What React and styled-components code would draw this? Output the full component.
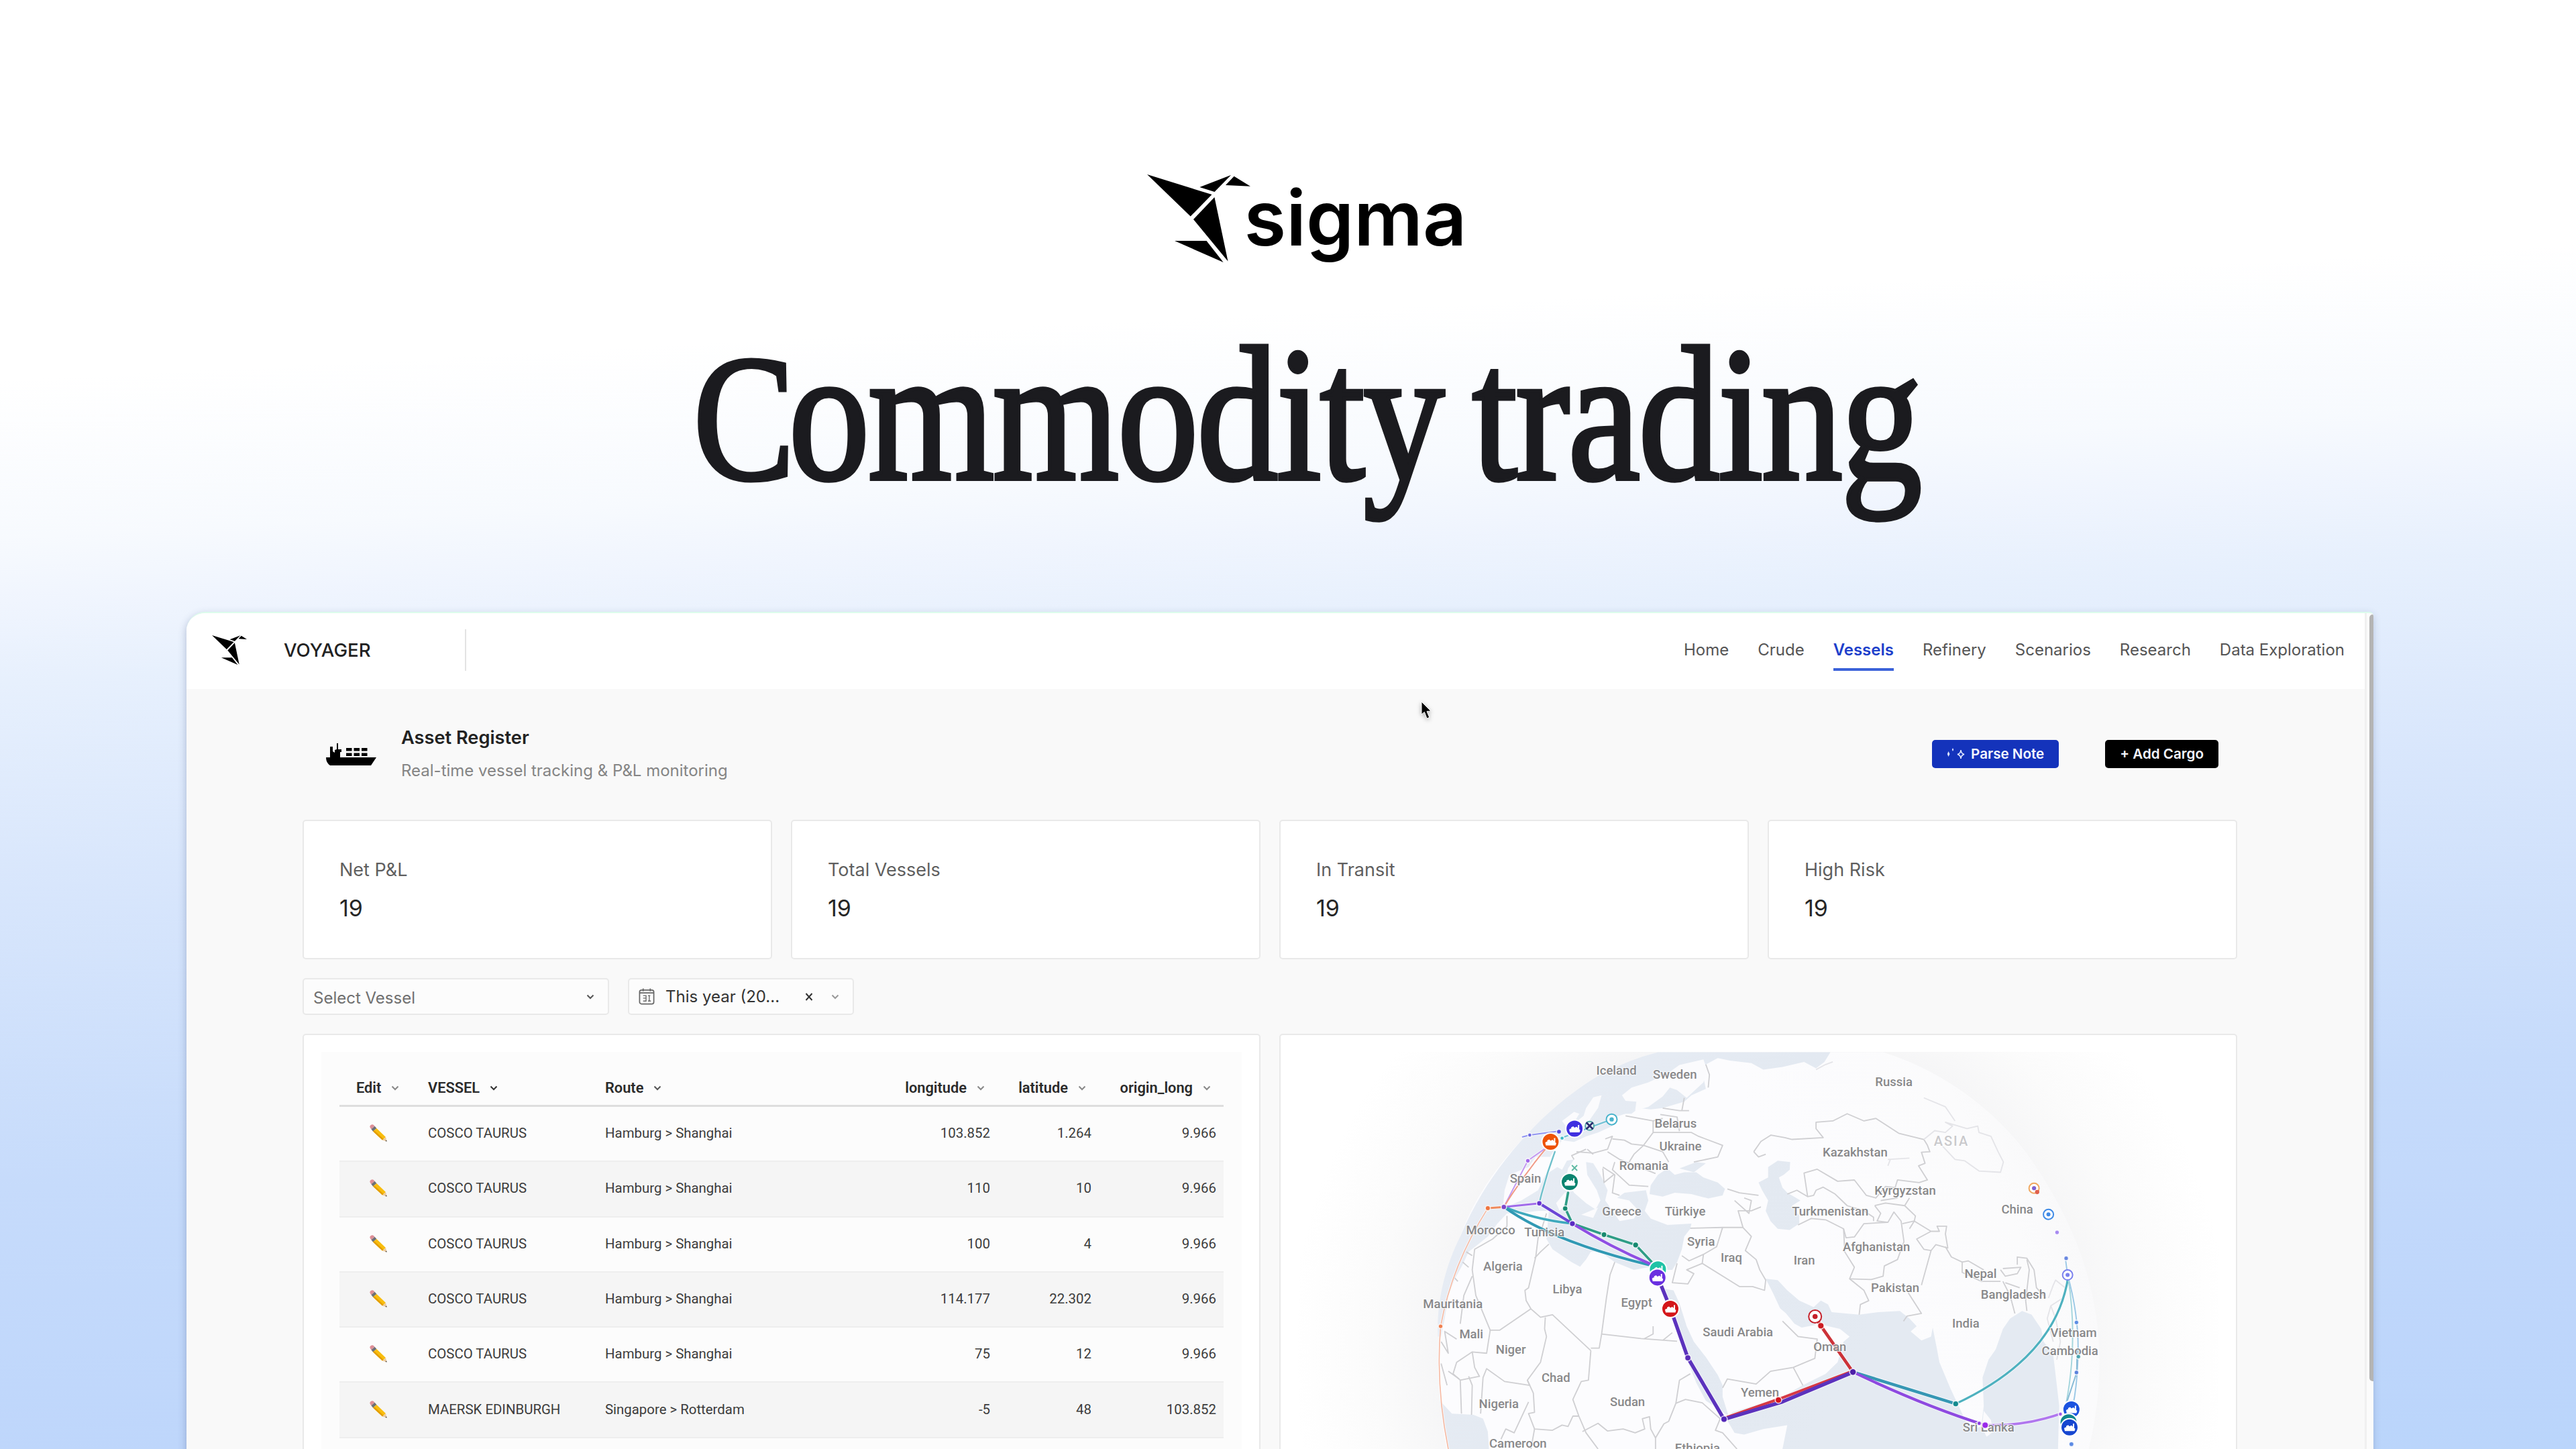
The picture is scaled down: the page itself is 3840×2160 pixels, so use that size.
import styled, { createGlobalStyle } from "styled-components";

const navItems = ["Home", "Crude", "Vessels", "Refinery", "Scenarios", "Research", "Data Exploration"];

const stats = [
    { label: "Net P&L", value: 19 },
    { label: "Total Vessels", value: 19 },
    { label: "In Transit", value: 19 },
    { label: "High Risk", value: 19 },
];

const rows = [
    ["COSCO TAURUS", "Hamburg > Shanghai", "103.852", "1.264", "9.966"],
    ["COSCO TAURUS", "Hamburg > Shanghai", "110", "10", "9.966"],
    ["COSCO TAURUS", "Hamburg > Shanghai", "100", "4", "9.966"],
    ["COSCO TAURUS", "Hamburg > Shanghai", "114.177", "22.302", "9.966"],
    ["COSCO TAURUS", "Hamburg > Shanghai", "75", "12", "9.966"],
    ["MAERSK EDINBURGH", "Singapore > Rotterdam", "-5", "48", "103.852"],
];

// map units -> svg pixels
const SX = 0.35714;
const SY = 0.38265;
const mx = (u) => 165 + u * SX;
const my = (v) => -8 + v * SY;

const oceans = [
    "M1040 22L1760 22L1735 60L1700 85L1650 60L1560 80L1480 90L1430 65L1340 55L1290 45L1240 70L1230 120L1240 165L1180 190L1150 215L1060 240L1010 245L960 240L930 262L905 262L860 275L850 310L790 335L740 350L690 372L640 365L610 400L590 430L530 430L500 470L420 500L400 560L395 610L410 650L370 690L330 740L290 770L250 800L225 850L195 900L165 970L150 1060L135 1130L122 1130C115 1000 150 860 215 740C330 480 560 240 800 110Q920 50 1040 22Z",
    "M395 630L470 600L540 560L570 500L620 470L640 480L660 445L690 440L665 475L655 520L690 570L740 610L780 635L800 600L785 560L745 500L740 450L770 455L800 500L830 560L820 600L850 640L880 680L940 670L960 640L920 600L870 590L900 570L990 560L1000 600L985 640L1010 670L1080 695L1180 690L1175 710L1150 740L1140 790L1120 840L1100 870L1050 870L1000 860L940 870L860 840L800 800L760 800L740 830L715 858L680 840L600 790L575 750L580 690L585 640L540 640L460 650L410 650Z",
    "M1010 540L1040 500L1080 475L1110 500L1150 490L1200 490L1230 510L1290 530L1320 555L1310 580L1250 592L1180 575L1110 570L1060 585L1005 575Z",
    "M1130 475L1200 450L1240 455L1190 490Z",
    "M1500 470L1540 445L1592 450L1590 480L1565 500L1545 510L1560 550L1580 570L1635 600L1600 620L1630 660L1630 690L1590 715L1540 710L1510 680L1490 640L1500 600L1475 560L1460 530L1500 510Z",
    "M1070 945L1105 950L1130 1000L1160 1090L1190 1150L1240 1210L1290 1280L1310 1320L1310 1365L1335 1440L1290 1410L1240 1380L1200 1310L1170 1240L1140 1160L1110 1080L1085 1000Z",
    "M1490 905L1540 910L1580 950L1630 990L1690 1015L1720 990L1750 1005L1765 1035L1880 1045L1960 1035L2050 1030L2090 1060L2120 1090L2095 1110L2140 1145L2180 1130L2187 1095L2205 1180L2215 1230L2260 1330L2310 1430L2330 1470L2360 1490L2390 1480L2400 1400L2395 1290L2420 1220L2450 1180L2480 1100L2510 1060L2560 1030L2600 1045L2640 1100L2650 1150L2690 1200L2700 1280L2715 1400L2710 1568L1560 1568L1580 1475L1480 1490L1400 1512L1360 1505L1325 1450L1350 1425L1560 1365L1640 1322L1740 1275L1790 1230L1815 1150L1840 1130L1800 1100L1730 1085L1712 1050L1695 1085L1640 1095L1610 1080L1575 1040L1550 1020L1520 960Z",
    "M130 1380L180 1430L270 1435L310 1450L330 1500L335 1568L165 1568Q140 1470 130 1380Z",
];

const islands = [
    "M890 190L930 160L1000 140L1080 105L1130 72L1230 50L1245 90L1230 140L1160 200L1120 170L1090 160L1060 195L1000 235L945 250L950 215L905 212Z",
    "M805 190L770 198L740 240L730 270L690 300L660 335L710 342L745 300L790 240Z",
    "M640 290L690 255L712 262L690 295L655 310Z",
    "M615 610L655 565L655 615L630 640Z",
    "M720 655L790 628L770 668Z",
    "M2400 1420L2430 1455L2440 1500L2412 1520L2393 1485Z",
];

const borders = [
    "M575 650L555 710L540 745L530 820L500 940L485 950L490 990L510 1022L550 1055L600 1045L760 1185",
    "M585 770L550 800L525 825",
    "M410 660L410 700L350 750L275 790L265 870L280 970L340 1105L380 1105L510 1022",
    "M265 895L230 970L215 1080M240 800L265 815M225 840L250 860M190 900L205 915",
    "M340 1105L325 1195L265 1190L200 1230L185 1275L215 1300M135 1150L165 1195L150 1110L200 1140",
    "M265 1190L275 1250L295 1285L215 1300L220 1430M250 1285L265 1320L262 1435M135 1235L160 1320M165 1265L210 1295",
    "M570 1055L567 1100L575 1130L550 1230L495 1300L505 1320L400 1305L325 1255L310 1290L300 1430",
    "M495 1300L520 1350L525 1425L500 1430L525 1490L600 1495L640 1475L665 1480L685 1440L710 1440",
    "M525 1490L510 1568M500 1385L440 1505L405 1490L385 1530",
    "M760 1185L750 1300L720 1305L685 1375L710 1440L740 1505L790 1568",
    "M860 840L840 890L825 980L805 1120L795 1175L760 1175",
    "M805 1120L970 1138L1120 1148M980 1140L1020 1120L1020 1090M1060 1145L1100 1115",
    "M725 1500L790 1468L830 1498L895 1490L945 1505L985 1490L975 1450L1005 1442L1010 1490L1030 1525L1030 1568",
    "M1030 1525L1065 1470L1085 1460L1115 1390L1130 1300L1175 1275",
    "M1115 1390L1155 1375L1225 1388L1300 1450L1280 1495L1310 1505L1370 1568",
    "M1310 1330L1330 1295L1450 1315L1510 1265L1605 1250L1695 1215L1705 1140L1625 1130L1560 1070",
    "M1605 1250L1645 1320",
    "M1175 708L1310 705L1395 705L1430 740L1405 795L1450 830L1465 870L1490 910L1485 950L1435 935L1380 935L1225 845L1160 870L1190 885L1165 925L1100 920L1120 845",
    "M1310 705L1285 780L1230 810L1225 845M1230 810L1170 835L1140 815",
    "M1395 705L1375 640L1430 640L1470 625M1330 555L1380 570L1460 580M1360 600L1420 650L1430 600L1400 590",
    "M905 270L1020 290L1020 335L980 385L930 380L900 365L850 360",
    "M1020 335L1180 335L1210 350L1310 385L1290 430L1190 450",
    "M830 410L880 440L990 480L1030 495M700 410L770 415L830 400L850 350L820 360",
    "M810 470L860 500L850 570L880 580M860 450L850 480L920 540L1000 545M810 475L815 530L855 500",
    "M980 385L940 420L920 450M980 385L1060 410L1085 450M690 440L680 425L740 400M745 400L770 420",
    "M1060 240L1130 250L1170 250M1050 265L1120 275L1130 330M1150 200L1140 250M1020 290L1060 280",
    "M1240 70L1255 110L1250 160",
    "M1440 410L1470 370L1512 345L1570 355L1600 362L1730 355L1700 320L1700 295L1770 290L1830 262L1900 290L1950 280L2045 338L2150 362",
    "M1440 410L1460 430L1490 420",
    "M2150 362L2165 385L2175 410L2140 412L2155 455L2128 465L2165 520L2130 530L2040 520L2030 550L1990 545L1950 590L1910 580L1860 520L1790 525L1705 478L1650 493L1665 585",
    "M1580 575L1620 560L1665 585L1690 580L1700 560L1730 548L1780 575L1830 620L1900 640L1940 665L1940 680",
    "M1945 620L1990 610L2070 620L2090 590M1945 620L1970 650L1955 680L2000 685M1970 600L2040 590M2070 620L2115 660L2110 680L2060 690",
    "M1625 695L1680 670L1740 675L1815 710L1825 745L1860 742L1900 690L2000 685L2025 645L2055 680L2067 760L2040 830L1985 855L1980 895L1930 908L1840 905",
    "M1815 710L1820 800L1860 860L1840 905L1900 950L1920 990L1885 1005L1880 1045",
    "M2090 710L2110 680L2180 720L2120 750L2150 790L2180 795L2200 772L2250 785L2240 730L2245 700L2205 700L2215 720L2180 720",
    "M2180 795L2140 930M2085 960L2140 1040L2080 1050L2065 1070",
    "M2240 780L2265 820L2310 840L2310 880L2390 915L2470 915",
    "M2310 840L2335 835L2400 870",
    "M2470 870L2490 895L2540 885L2555 860L2480 865M2540 850L2540 820L2580 825L2610 870L2620 940L2660 980",
    "M2480 915L2510 970L2530 1040M2490 920L2550 940M2580 830L2590 870L2575 990L2580 1030",
];

const faintBorders = [
    "M2150 362L2195 328L2240 335L2270 310L2240 295L2330 320L2375 310L2380 335L2430 350L2460 410L2482 450L2470 490L2380 485L2320 445L2280 440L2220 380",
    "M2150 200L2240 235L2280 290M1700 90L1740 70L1770 60",
    "M2670 980L2690 930L2700 910L2740 940L2730 980L2680 1010L2700 1060L2720 1150L2705 1220M2680 1010L2665 1060L2690 1150",
    "M2010 440L2000 465M2000 440L2090 435",
];

const labels = [
    ["Iceland", 867, 110], ["Sweden", 1111, 125], ["Belarus", 1114, 316], ["Ukraine", 1134, 405],
    ["Romania", 981, 480], ["Spain", 487, 530], ["Greece", 889, 659], ["Türkiye", 1154, 659],
    ["Morocco", 342, 732], ["Tunisia", 566, 740], ["Syria", 1220, 776], ["Iraq", 1347, 838],
    ["Algeria", 393, 872], ["Libya", 662, 962], ["Egypt", 951, 1013], ["Mauritania", 184, 1018],
    ["Mali", 261, 1137], ["Niger", 426, 1198], ["Saudi Arabia", 1374, 1130], ["Chad", 614, 1306],
    ["Nigeria", 376, 1408], ["Sudan", 913, 1400], ["Yemen", 1466, 1365], ["Cameroon", 456, 1563],
    ["Ethiopia", 1205, 1580], ["Russia", 2025, 155], ["Kazakhstan", 1863, 428],
    ["Kyrgyzstan", 2072, 577], ["China", 2540, 652], ["Turkmenistan", 1759, 658],
    ["Afghanistan", 1952, 797], ["Iran", 1651, 850], ["Nepal", 2387, 902], ["Pakistan", 2030, 957],
    ["Bangladesh", 2524, 982], ["India", 2325, 1096], ["Vietnam", 2775, 1132], ["Oman", 1758, 1187],
    ["Cambodia", 2760, 1202], ["Sri Lanka", 2420, 1499],
];

const routes = [
    { d: "M330 630Q180 850 133 1090Q112 1320 165 1568", color: "#f6b9a2", width: 1.6 },
    { d: "M330 630L397 625", color: "#ef8a5c", width: 3 },
    { d: "M565 400L497 445L397 625", color: "#c49af0", width: 2 },
    { d: "M575 395Q480 500 397 625", color: "#f09a86", width: 2 },
    { d: "M610 410Q570 510 545 610", color: "#6fc0cb", width: 2.4 },
    { d: "M475 352L505 345L625 330", color: "#8f93f0", width: 2 },
    { d: "M635 357L847 284", color: "#77c3d6", width: 2.4 },
    { d: "M397 625L545 611", color: "#a06bea", width: 3 },
    { d: "M397 625Q530 675 683 690", color: "#3fa9bd", width: 3.6 },
    { d: "M397 625Q600 760 1000 850", color: "#3199b4", width: 4 },
    { d: "M665 570L653 630L683 690L815 733L947 773L1015 840", color: "#2f9d86", width: 3.6 },
    { d: "M545 611L683 690", color: "#6c46d6", width: 4.2 },
    { d: "M683 690Q840 780 1015 850", color: "#8f4fe3", width: 4.2 },
    { d: "M1316 1448L1543 1374L1854 1264", color: "#d63a45", width: 4 },
    { d: "M1040 900L1092 1020L1165 1213L1316 1452L1560 1384L1854 1269", color: "#5b32bd", width: 5.4 },
    { d: "M1696 1052L1720 1088L1854 1268", color: "#cc3238", width: 4.6 },
    { d: "M1854 1268L2283 1392", color: "#3697b4", width: 4.6 },
    { d: "M2283 1392Q2700 1210 2752 900", color: "#4eb1bf", width: 3.2 },
    { d: "M1854 1268Q2150 1400 2406 1475", color: "#8e4ae0", width: 4.2 },
    { d: "M2406 1475Q2570 1480 2722 1430", color: "#b077ee", width: 3.6 },
    { d: "M2740 820L2750 890Q2800 1060 2793 1210Q2790 1320 2772 1400", color: "#9dc9e6", width: 2 },
    { d: "M2752 900Q2795 1150 2742 1400", color: "#a6d6dd", width: 2 },
    { d: "M2790 1180L2788 1270L2745 1390", color: "#89bcd6", width: 2 },
];

const dots = [
    [505, 345, "#6a66e0", 3], [627, 332, "#4f48dd", 3.6], [640, 357, "#3bb6c4", 3], [497, 445, "#a166ea", 3.4],
    [330, 630, "#ee7440", 3.8], [397, 625, "#7d47c9", 4], [545, 611, "#6632cf", 4], [653, 631, "#16896f", 4],
    [683, 690, "#5a2bc2", 4.4], [815, 733, "#16896f", 4.2], [947, 773, "#16896f", 4.4], [133, 1090, "#f08050", 3.4],
    [1165, 1213, "#5a2bb8", 4.6], [1316, 1452, "#5226b8", 4.8], [1543, 1377, "#d3141f", 4.8],
    [1854, 1268, "#4d1fa8", 5], [1720, 1088, "#cc1c22", 4.8], [2283, 1392, "#138a8f", 4.4],
    [2381, 1468, "#8b3fe0", 3.2], [2406, 1475, "#9a2bea", 4.8], [2720, 1432, "#a05be8", 3], [2706, 724, "#a78bf0", 3.4],
    [2744, 825, "#6a88e0", 3.4], [2787, 1075, "#5c8ee4", 3.4], [2795, 1208, "#4aa3ae", 3.4], [2787, 1270, "#5b82dc", 3.4],
    [2766, 1549, "#5b8ae4", 3.6],
];

const ships = [
    [592, 371, "#ee5206"], [692, 320, "#3f2fe0"], [672, 528, "#0b8470"], [1040, 868, "#1fc3a6"],
    [1038, 900, "#6a30e0"], [1092, 1022, "#d4161a"], [2766, 1414, "#1c53e0"], [2754, 1464, "#11878c"],
    [2758, 1484, "#1646d0"],
];

const targets = [
    [847, 284, "#49b3cc", 8], [1696, 1052, "#c5202a", 9.5], [2610, 552, "#f0a860", 7.5],
    [2670, 654, "#3f8ae6", 7.5], [2750, 890, "#7a80ee", 7.5],
];

export default function App() {
    return (
        <Page>
            <GlobalStyle />
            <Hero>
                <Brand>
                    <BrandMark viewBox="0 0 154 131"><Bird /></BrandMark>
                    <BrandName>sigma</BrandName>
                </Brand>
                <Headline>Commodity trading</Headline>
            </Hero>
            <Window>
                <Main>
                    <TopBar>
                        <SmallMark viewBox="0 0 154 131"><Bird /></SmallMark>
                        <AppName>VOYAGER</AppName>
                        <Divider />
                        <Nav>
                            {navItems.map((item) => (
                                <NavItem key={item} $active={item === "Vessels"}>{item}</NavItem>
                            ))}
                        </Nav>
                    </TopBar>
                    <Content>
                        <PageHead>
                            <ShipIcon />
                            <Titles>
                                <Title>Asset Register</Title>
                                <Subtitle>Real-time vessel tracking &amp; P&amp;L monitoring</Subtitle>
                            </Titles>
                            <Actions>
                                <Button $color="#1433bb"><Sparks />Parse Note</Button>
                                <Button $color="#000000">+ Add Cargo</Button>
                            </Actions>
                        </PageHead>
                        <Stats>
                            {stats.map((stat) => (
                                <StatCard key={stat.label}>
                                    <StatLabel>{stat.label}</StatLabel>
                                    <StatValue>{stat.value}</StatValue>
                                </StatCard>
                            ))}
                        </Stats>
                        <Filters>
                            <Select $width={457}>
                                <Placeholder>Select Vessel</Placeholder>
                                <Chevron color="#555555" />
                            </Select>
                            <Select $width={337}>
                                <CalendarIcon />
                                <Picked>This year (20...</Picked>
                                <ClearIcon viewBox="0 0 12 12"><path d="M1.5 1L10.5 11M10.5 1L1.5 11" /></ClearIcon>
                                <Chevron color="#999999" />
                            </Select>
                        </Filters>
                        <Panels>
                            <Panel>
                                <VesselTable />
                            </Panel>
                            <Panel>
                                <VesselMap />
                            </Panel>
                        </Panels>
                    </Content>
                </Main>
                <ScrollTrack><ScrollThumb /></ScrollTrack>
                <Pointer viewBox="0 0 16 28">
                    <path d="M1 1L1 20L5.4 16.4L9 26L12.8 24.4L9 15.4L15 15Z" />
                </Pointer>
            </Window>
        </Page>
    );
}

function Bird() {
    return (
        <>
            <path d="M0 0L96.5 30L64.7 62.5Z" />
            <path d="M78.3 19L125 1L100.5 26Z" />
            <path d="M117 16L129.6 2.8L154 17.8Z" />
            <path d="M100.4 34L120.5 129.5L69 67Z" />
            <path d="M41 99L88.5 99L113.6 131Z" />
        </>
    );
}

function ShipIcon() {
    return (
        <ShipSvg viewBox="0 0 75 33">
            <path d="M0 21H75L67 33H6Q0 29 0 21Z" />
            <path d="M6 5H10V12L13 14V10L16 9V0H18V9H23V13H21V22H6Z" />
            <path d="M30 7H38.5V11.5H30ZM41.5 7H50V11.5H41.5ZM53 7H61.5V11.5H53ZM30 14.5H38.5V19H30ZM41.5 14.5H50V19H41.5ZM53 14.5H61.5V19H53Z" />
        </ShipSvg>
    );
}

function Sparks() {
    return (
        <SparksSvg viewBox="0 0 28 20">
            <path d="M21 4Q21.5 9.5 26 10.5Q21.5 11.5 21 17Q20.5 11.5 16 10.5Q20.5 9.5 21 4Z" fill="none" stroke="#dfe6ff" strokeWidth="1.6" />
            <path d="M2.5 6L4.5 10L2.5 14L0.8 10ZM9 1L10.2 3.5L9 6L7.8 3.5Z" fill="#dfe6ff" />
        </SparksSvg>
    );
}

function Chevron({ color }) {
    return (
        <ChevronSvg viewBox="0 0 12 8" stroke={color}>
            <path d="M1.5 1.5L6 6L10.5 1.5" />
        </ChevronSvg>
    );
}

function CalendarIcon() {
    return (
        <CalendarSvg viewBox="0 0 26 26">
            <rect x="1.5" y="3" width="22" height="21.5" rx="3" />
            <path d="M7 0.5V5M18 0.5V5M1.5 7.5H23.5" />
            <path d="M7 11.5H11.5V20H7M7 15.5H11M14.5 11.5H18M16.5 11.5V20M14.5 20H19" strokeWidth="1.4" />
        </CalendarSvg>
    );
}

function Pencil() {
    return (
        <PencilSvg viewBox="0 0 26 26">
            <path d="M0.8 5Q-0.4 2.4 1.8 0.9Q4.4 -0.6 6.2 1.2L7.6 2.8L2.4 7.2Z" fill="#de8f97" />
            <path d="M2.4 7.2L7.6 2.8L10.4 6L5 10.6Z" fill="#6d7076" />
            <path d="M5 10.6L10.4 6L24 19L19 23.4Z" fill="#f8bd0e" />
            <path d="M5 10.6L6.8 9L20.8 21.9L19 23.4Z" fill="#e29c00" />
            <path d="M19 23.4L24 19L25.6 25.6Z" fill="#ecca9c" />
            <path d="M23.3 24.9L25.1 23.4L25.6 25.6Z" fill="#333333" />
        </PencilSvg>
    );
}

function VesselTable() {
    return (
        <TableBox>
            <HeadRow>
                <HeadCell $edit>Edit<Chevron color="#888888" /></HeadCell>
                <HeadCell>VESSEL<Chevron color="#333333" /></HeadCell>
                <HeadCell>Route<Chevron color="#555555" /></HeadCell>
                <HeadCell $end>longitude<Chevron color="#888888" /></HeadCell>
                <HeadCell $end>latitude<Chevron color="#888888" /></HeadCell>
                <HeadCell $end>origin_long<Chevron color="#888888" /></HeadCell>
            </HeadRow>
            {rows.map((row, i) => (
                <Row key={i} $striped={i % 2 === 1}>
                    <EditCell><Pencil /></EditCell>
                    {row.map((value, c) => (
                        <Cell key={c} $end={c > 1}>{value}</Cell>
                    ))}
                </Row>
            ))}
        </TableBox>
    );
}

function VesselMap() {
    return (
        <MapSvg viewBox="0 0 1372 592">
            <defs>
                <radialGradient id="halo" cx="690" cy="440" r="700" gradientUnits="userSpaceOnUse">
                    <stop offset="0.66" stopColor="#f5f5f6" />
                    <stop offset="0.82" stopColor="#fbfbfb" />
                    <stop offset="1" stopColor="#ffffff" />
                </radialGradient>
                <linearGradient id="land" gradientUnits="userSpaceOnUse" x1="1700" x2="2700" y1="800" y2="300">
                    <stop offset="0" stopColor="#fcfcfe" />
                    <stop offset="0.7" stopColor="#fbfbfc" />
                    <stop offset="1" stopColor="#f8f8f9" />
                </linearGradient>
                <linearGradient id="sea" gradientUnits="userSpaceOnUse" x1="100" x2="1900" y1="0" y2="1200">
                    <stop offset="0" stopColor="#e9eef6" />
                    <stop offset="0.6" stopColor="#e3e9f1" />
                    <stop offset="1" stopColor="#e4eaf2" />
                </linearGradient>
            </defs>
            <rect width="1372" height="592" fill="url(#halo)" />
            <g transform={`translate(165 -8) scale(${SX} ${SY})`}>
                <path d="M1040 22C700 110 330 430 215 740C110 1010 100 1300 165 1600L2830 1600C2940 1200 2880 850 2640 500C2500 280 2250 100 1980 22Z" fill="url(#land)" />
                {oceans.map((d) => <path key={d} d={d} fill="url(#sea)" />)}
                {islands.map((d) => <path key={d} d={d} fill="#fbfbfd" />)}
                {borders.map((d) => <Border key={d} d={d} stroke="#cfcfd2" />)}
                {faintBorders.map((d) => <Border key={d} d={d} stroke="#e4e4e8" />)}
                {routes.map((r) => <Route key={r.d} d={r.d} stroke="#ffffff" strokeWidth={r.width + 2} strokeOpacity="0.6" />)}
                {routes.map((r) => <Route key={r.color + r.d} d={r.d} stroke={r.color} strokeWidth={r.width} />)}
            </g>
            {labels.map(([name, u, v]) => (
                <MapLabel key={name} x={mx(u)} y={my(v)}>{name}</MapLabel>
            ))}
            <RegionLabel x={mx(2265)} y={my(388)}>ASIA</RegionLabel>
            {dots.map(([u, v, color, r]) => (
                <circle key={`${u}-${v}`} cx={mx(u)} cy={my(v)} r={r} fill={color} stroke="#ffffff" strokeWidth="1.6" strokeOpacity="0.8" />
            ))}
            {targets.map(([u, v, color, r]) => (
                <g key={`${u}-${v}`} stroke={color}>
                    <circle cx={mx(u)} cy={my(v)} r={r} fill="#ffffff" strokeWidth="2" />
                    <circle cx={mx(u)} cy={my(v)} r={r * 0.4} fill={color} stroke="none" />
                </g>
            ))}
            <circle cx={mx(2610)} cy={my(552)} r="3" fill="#7b62d8" />
            <circle cx={mx(2623)} cy={my(567)} r="3.2" fill="#e0604c" />
            <circle cx={mx(755)} cy={my(309)} r="6.5" fill="#e6f4f4" stroke="#58a9a9" strokeWidth="2" />
            <path d={`M${mx(755) - 5} ${my(309) - 5}l10 10m0 -10l-10 10`} stroke="#2b2a6e" strokeWidth="2.6" />
            <path d={`M${mx(692) - 4} ${my(473) - 4}l8 8m0 -8l-8 8`} stroke="#5cb8a2" strokeWidth="1.8" />
            {ships.map(([u, v, color]) => (
                <g key={`${u}-${v}`} transform={`translate(${mx(u)} ${my(v)})`}>
                    <circle r="13" fill={color} stroke="#ffffff" strokeWidth="2" />
                    <path d="M-8 1.5L-6.5 0H-5V-2L-2 -3.5L0 -1.5L3 -3L5 -1V-5.5H7V1L8.5 2L7.5 5.5H-7Z" fill="#ffffff" />
                </g>
            ))}
        </MapSvg>
    );
}

const GlobalStyle = createGlobalStyle`
    * {
        box-sizing: border-box;
    }

    body {
        margin: 0;
        font-family: Inter, sans-serif;
    }
`;

const Page = styled.div`
    width: 3840px;
    height: 2160px;
    overflow: hidden;
    background: linear-gradient(177deg, #ffffff 24%, #f7fafe 34%, #f0f5fe 38%, #e7f0fd 43%, #d8e6fc 56%, #c6dbfb 75%, #bed6fb 92%, #bad5fb 100%);
`;

const Hero = styled.header`
    height: 912px;
    padding: 260px 0 0 56px;
    display: flex;
    flex-direction: column;
    align-items: center;
`;

const Brand = styled.div`
    height: 131px;
    display: flex;
`;

const BrandMark = styled.svg`
    width: 154px;
    height: 131px;
    fill: #000000;
`;

const BrandName = styled.span`
    margin: -1px 0 0 -9px;
    font-weight: 600;
    font-size: 114px;
    line-height: 131px;
    color: #000000;
`;

const Headline = styled.h1`
    margin: 84px 0 0;
    font-family: 'Liberation Serif', serif;
    font-weight: 400;
    font-size: 286px;
    line-height: 286px;
    letter-spacing: -0.01em;
    word-spacing: -0.06em;
    white-space: nowrap;
    color: #1b1b1f;
    -webkit-text-stroke: 6px #1b1b1f;
    transform: scaleX(0.846);

    &::first-letter {
        margin-right: -0.03em;
        font-size: 268px;
    }
`;

const Window = styled.section`
    position: relative;
    width: 3260px;
    height: 1300px;
    margin-left: 278px;
    display: flex;
    overflow: hidden;
    border-top: 2px solid #dcfcec;
    border-radius: 28px 6px 0 0;
    background: #f9f9f9;
    box-shadow: -1px 4px 12px rgba(60, 80, 130, 0.3);
`;

const Main = styled.div`
    flex: 1;
    border-right: 3px solid #f0f0f0;
`;

const TopBar = styled.div`
    height: 113px;
    padding: 0 30px 4px 38px;
    display: flex;
    align-items: center;
    background: #ffffff;
`;

const SmallMark = styled.svg`
    width: 52px;
    height: 46px;
    fill: #000000;
`;

const AppName = styled.span`
    width: 270px;
    margin-left: 55px;
    font-weight: 500;
    font-size: 27.6px;
    color: #222222;
`;

const Divider = styled.div`
    width: 2px;
    height: 62px;
    background: #e3e3e3;
`;

const Nav = styled.nav`
    height: 62px;
    margin-left: auto;
    display: flex;
    gap: 43px;
`;

const NavItem = styled.a`
    padding-top: 15px;
    font-weight: ${(props) => (props.$active ? 600 : 400)};
    font-size: 24px;
    line-height: 32px;
    color: ${(props) => (props.$active ? "#1d3fcb" : "#555555")};
    border-bottom: 4px solid ${(props) => (props.$active ? "#3b62d9" : "transparent")};
`;

const Content = styled.div`
    padding: 0 190px 0 173px;
`;

const PageHead = styled.div`
    height: 195px;
    padding: 0 28px 0 35px;
    display: flex;
    align-items: center;
`;

const ShipSvg = styled.svg`
    width: 75px;
    height: 33px;
    fill: #000000;
`;

const Titles = styled.div`
    margin-left: 37px;
    display: flex;
    flex-direction: column;
    gap: 17px;
`;

const Title = styled.h2`
    margin: 0;
    font-weight: 600;
    font-size: 27.2px;
    line-height: 32px;
    color: #222222;
`;

const Subtitle = styled.p`
    margin: 0;
    font-size: 24px;
    line-height: 32px;
    color: #858585;
`;

const Actions = styled.div`
    margin: 0 0 2px auto;
    display: flex;
    gap: 69px;
`;

const Button = styled.button`
    height: 42px;
    padding: 0 22px;
    display: flex;
    align-items: center;
    gap: 8px;
    border: none;
    border-radius: 5px;
    background: ${(props) => props.$color};
    font-family: Inter, sans-serif;
    font-weight: 600;
    font-size: 20.6px;
    color: #f4f6ff;
`;

const SparksSvg = styled.svg`
    width: 28px;
    height: 20px;
`;

const Stats = styled.div`
    display: grid;
    grid-template-columns: repeat(4, 1fr);
    gap: 28px;
`;

const StatCard = styled.div`
    height: 208px;
    padding: 54px 53px;
    border: 2px solid #e9e9e9;
    border-radius: 5px;
    background: #ffffff;
`;

const StatLabel = styled.div`
    font-size: 27px;
    line-height: 37px;
    color: #5f5f5f;
`;

const StatValue = styled.div`
    margin-top: 19px;
    font-size: 34px;
    line-height: 40px;
    color: #262626;
`;

const Filters = styled.div`
    margin-top: 28px;
    display: flex;
    gap: 28px;
`;

const Select = styled.div`
    width: ${(props) => props.$width}px;
    height: 55px;
    padding: 0 20px 0 14px;
    display: flex;
    align-items: center;
    border: 2px solid #e9e9e9;
    border-radius: 5px;
    background: #fcfcfc;
`;

const Placeholder = styled.span`
    flex: 1;
    padding-top: 3px;
    font-size: 24px;
    color: #707070;
`;

const Picked = styled.span`
    flex: 1;
    margin-left: 15px;
    font-size: 24px;
    white-space: nowrap;
    color: #333333;
`;

const ClearIcon = styled.svg`
    width: 12px;
    height: 12px;
    margin-right: 27px;
    fill: none;
    stroke: #333333;
    stroke-width: 2;
`;

const ChevronSvg = styled.svg`
    width: 12px;
    height: 8px;
    fill: none;
    stroke-width: 2;
`;

const CalendarSvg = styled.svg`
    width: 25px;
    height: 25px;
    fill: none;
    stroke: #666666;
    stroke-width: 1.8;
`;

const Panels = styled.div`
    margin-top: 28px;
    display: grid;
    grid-template-columns: 1fr 1fr;
    gap: 28px;
`;

const Panel = styled.div`
    height: 700px;
    padding: 25px 26px;
    border: 2px solid #e9e9e9;
    border-radius: 5px;
    background: #ffffff;
`;

const TableBox = styled.div`
    height: 640px;
    padding: 28px 27px 0;
    overflow: hidden;
    background: #fcfcfc;
    font-family: Roboto, sans-serif;
    font-size: 20.4px;
`;

const HeadRow = styled.div`
    height: 54px;
    display: grid;
    grid-template-columns: 122px 264px 442px 152px 151px 186px;
    align-items: center;
    border-bottom: 3px solid #dedede;
`;

const HeadCell = styled.div`
    padding: 0 ${(props) => (props.$end ? 18 : 10)}px 0 ${(props) => (props.$edit ? 25 : 10)}px;
    display: flex;
    align-items: center;
    justify-content: ${(props) => (props.$end ? "flex-end" : "flex-start")};
    gap: 15px;
    font-weight: 600;
    font-size: 21.8px;
    color: #2b2b2b;
`;

const Row = styled.div`
    height: 82.3px;
    display: grid;
    grid-template-columns: 122px 264px 442px 152px 151px 186px;
    align-items: center;
    border-bottom: 2px solid #eeeeee;
    background: ${(props) => (props.$striped ? "#f5f5f5" : "transparent")};
`;

const EditCell = styled.div`
    padding: 0 0 2px 45px;
    display: flex;
`;

const Cell = styled.div`
    padding: 0 10px 2px;
    text-align: ${(props) => (props.$end ? "right" : "left")};
    color: #3c3c3c;
`;

const PencilSvg = styled.svg`
    width: 26px;
    height: 26px;
`;

const MapSvg = styled.svg`
    display: block;
    width: 1372px;
    height: 592px;
`;

const Border = styled.path`
    fill: none;
    stroke-width: 1.8px;
    stroke-linejoin: round;
    vector-effect: non-scaling-stroke;
`;

const Route = styled.path`
    fill: none;
    stroke-linecap: round;
    stroke-linejoin: round;
    vector-effect: non-scaling-stroke;
`;

const MapLabel = styled.text`
    font-family: Roboto, sans-serif;
    font-weight: 500;
    font-size: 18.5px;
    text-anchor: middle;
    fill: #88888a;
    stroke: #ffffff;
    stroke-width: 2px;
    stroke-opacity: 0.8;
    paint-order: stroke;
`;

const RegionLabel = styled(MapLabel)`
    font-size: 20px;
    letter-spacing: 2px;
    fill: #c9c9cc;
`;

const ScrollTrack = styled.div`
    width: 10px;
    padding: 2px 0 0 4px;
    background: #fbfbfb;
`;

const ScrollThumb = styled.div`
    height: 1143px;
    border-radius: 5px 0 0 5px;
    background: #b4b4b4;
`;

const Pointer = styled.svg`
    position: absolute;
    left: 1840px;
    top: 131px;
    width: 16px;
    height: 28px;
    fill: #000000;
    stroke: #ffffff;
    stroke-width: 1;
    filter: drop-shadow(0 2px 3px rgba(0, 0, 0, 0.3));
`;
